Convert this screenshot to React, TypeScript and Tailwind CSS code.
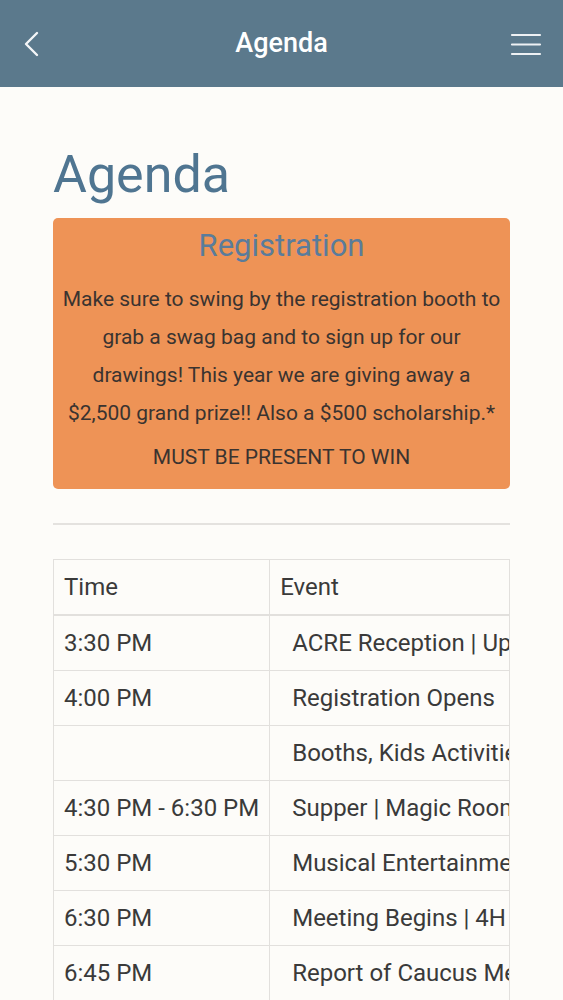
import React from "react";

const rows: [string, string][] = [
  ["3:30 PM", "ACRE Reception | Upper Level Lobby"],
  ["4:00 PM", "Registration Opens"],
  ["", "Booths, Kids Activities, and Games"],
  ["4:30 PM - 6:30 PM", "Supper | Magic Room"],
  ["5:30 PM", "Musical Entertainment"],
  ["6:30 PM", "Meeting Begins | 4H Building"],
  ["6:45 PM", "Report of Caucus Meetings"],
  ["7:00 PM", "Business Meeting"],
];

export default function App() {
  return (
    <div
      className="min-h-screen bg-[#fdfcf9] text-[#333]"
      style={{ fontFamily: "Roboto, 'Liberation Sans', sans-serif" }}
    >
      <header className="h-[87px] bg-[#5b798c] flex items-center justify-between px-[20px] relative">
        <svg width="20" height="28" viewBox="0 0 20 28" className="ml-[2px]">
          <path d="M15 3 L4 14 L15 25" fill="none" stroke="#f4f6f8" strokeWidth="2.4" strokeLinecap="round" strokeLinejoin="round" />
        </svg>
        <h1 className="absolute left-0 right-0 text-center text-white text-[27px] font-medium pointer-events-none">
          Agenda
        </h1>
        <svg width="32" height="24" viewBox="0 0 32 24" className="mr-[1px]">
          <path d="M2 3 H30 M2 12.5 H30 M2 22 H30" stroke="#eef1f4" strokeWidth="2.2" strokeLinecap="round" />
        </svg>
      </header>

      <main className="px-[53px] pt-[57px]">
        <h2 className="text-[52px] leading-[62px] text-[#4f7591] mb-[12px]">Agenda</h2>

        <div className="bg-[#ee9356] rounded-[5px] px-[7px] pt-[10px] pb-[17px] text-center">
          <h3 className="text-[31px] leading-[36px] text-[#5a7c9b] mb-[16px]">Registration</h3>
          <p className="text-[21px] leading-[38px] text-[#3a3330]">
            Make sure to swing by the registration booth to grab a swag bag and to sign up for our
            drawings! This year we are giving away a $2,500 grand prize!! Also a $500 scholarship.*
          </p>
          <p className="text-[21px] leading-[30px] text-[#3a3330] mt-[10px]">MUST BE PRESENT TO WIN</p>
        </div>

        <hr className="mt-[34px] mb-[34px] border-0 border-t-2 border-[#e4e2df]" />

        <div className="border border-[#e2e0dd] overflow-hidden">
          <table className="border-collapse whitespace-nowrap text-[24px] text-[#3a3a3a]">
            <thead>
              <tr className="border-b-2 border-[#e2e0dd]">
                <th className="font-normal text-left w-[216px] h-[55px] px-[10px] border-r border-[#e2e0dd]">Time</th>
                <th className="font-normal text-left h-[55px] px-[10px]">Event</th>
              </tr>
            </thead>
            <tbody>
              {rows.map(([t, e], i) => (
                <tr key={i} className="border-t border-[#e2e0dd]">
                  <td className="h-[55px] px-[10px] border-r border-[#e2e0dd]">{t}</td>
                  <td className="h-[55px] pl-[22px] pr-[10px]">{e}</td>
                </tr>
              ))}
            </tbody>
          </table>
        </div>
      </main>
    </div>
  );
}
